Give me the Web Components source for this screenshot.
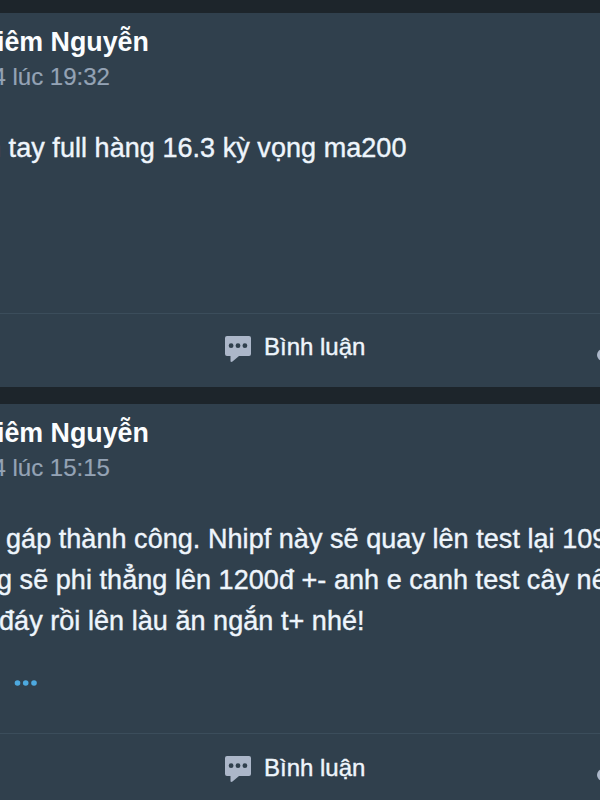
<!DOCTYPE html>
<html lang="vi">
<head>
<meta charset="UTF-8">
<title>Feed</title>
<style>
    body {
        margin: 0;
        height: 800px;
        overflow: hidden;
        background: #1d252b;
        font-family: "Liberation Sans", Arial, sans-serif;
    }
</style>
</head>
<body>
<post-feed>
    <feed-post style="--height: 374px">
        <span slot="name">iêm Nguyễn</span>
        <span slot="time">4 lúc 19:32</span>
        <post-line style="--shift: -14px">n tay full hàng 16.3 kỳ vọng ma200</post-line>
    </feed-post>
    <feed-post style="--height: 403px; --label-top: 17px">
        <span slot="name">iêm Nguyễn</span>
        <span slot="time">4 lúc 15:15</span>
        <post-line style="--shift: 6px">gáp thành công. Nhipf này sẽ quay lên test lại 109</post-line>
        <post-line style="--shift: -3px">g sẽ phi thẳng lên 1200đ +- anh e canh test cây nế</post-line>
        <post-line style="--shift: -1px">đáy rồi lên làu ăn ngắn t+ nhé!</post-line>
        <more-dots slot="more"></more-dots>
    </feed-post>
</post-feed>

<script>
class PostFeed extends HTMLElement {
    connectedCallback() {
        this.attachShadow({ mode: 'open' });
        this.shadowRoot.innerHTML = `
            <style>
                :host {
                    display: flex;
                    flex-direction: column;
                    gap: 17px;
                    padding-top: 13px;
                    overflow: hidden;
                }
            </style>
            <slot></slot>
        `;
    }
}

class PostLine extends HTMLElement {
    connectedCallback() {
        this.attachShadow({ mode: 'open' });
        this.shadowRoot.innerHTML = `
            <style>
                :host {
                    display: block;
                    margin-left: var(--shift, 0);
                    white-space: nowrap;
                    font-size: 27px;
                    letter-spacing: 0.05px;
                    line-height: 41px;
                    color: #eef5fc;
                    -webkit-text-stroke: 0.4px #eef5fc;
                }
            </style>
            <slot></slot>
        `;
    }
}

class MoreDots extends HTMLElement {
    connectedCallback() {
        this.attachShadow({ mode: 'open' });
        this.shadowRoot.innerHTML = `
            <style>
                :host {
                    display: flex;
                    padding: 37px 0 0 14px;
                }
            </style>
            <svg width="24" height="8" viewBox="0 0 24 8" fill="#4da9df">
                <circle cx="3.5" cy="4" r="2.8"/>
                <circle cx="11.7" cy="4" r="2.8"/>
                <circle cx="20" cy="4" r="2.8"/>
            </svg>
        `;
    }
}

class PostActions extends HTMLElement {
    connectedCallback() {
        this.attachShadow({ mode: 'open' });
        this.shadowRoot.innerHTML = `
            <style>
                :host {
                    display: flex;
                    justify-content: space-between;
                    box-sizing: border-box;
                    height: 74px;
                    flex-shrink: 0;
                    border-top: 1px solid #3b4d5b;
                    overflow: hidden;
                }
                .comment {
                    display: flex;
                    gap: 13px;
                    padding-left: 225px;
                    font-size: 24px;
                    line-height: 34px;
                    color: #eef5fc;
                    -webkit-text-stroke: 0.4px #eef5fc;
                }
                .comment svg {
                    margin-top: 22px;
                }
                .comment span {
                    margin-top: var(--label-top, 16px);
                }
                .share {
                    width: 3px;
                    padding-top: 35px;
                }
                .share svg {
                    display: block;
                }
            </style>
            <div class="comment">
                <svg width="26" height="27" viewBox="0 0 26 27">
                    <path fill="#acb7c9" d="M2 0H24Q26 0 26 2V18Q26 20 24 20H14L7.5 25.6Q5.5 26.8 5.5 24.8V20H2Q0 20 0 18V2Q0 0 2 0Z"/>
                    <g fill="#30404d">
                        <circle cx="6.1" cy="9.7" r="2.4"/>
                        <circle cx="13" cy="9.7" r="2.4"/>
                        <circle cx="19.9" cy="9.7" r="2.4"/>
                    </g>
                </svg>
                <span>Bình luận</span>
            </div>
            <div class="share">
                <svg width="12" height="12" viewBox="0 0 12 12"><circle cx="6" cy="6" r="6" fill="#acb7c9"/></svg>
            </div>
        `;
    }
}

class FeedPost extends HTMLElement {
    connectedCallback() {
        this.attachShadow({ mode: 'open' });
        this.shadowRoot.innerHTML = `
            <style>
                :host {
                    display: flex;
                    flex-direction: column;
                    flex-shrink: 0;
                    box-sizing: border-box;
                    height: var(--height);
                    padding-top: 11px;
                    background: #30404d;
                    overflow: hidden;
                }
                .name {
                    margin-left: -3px;
                    font-size: 26.8px;
                    font-weight: 700;
                    line-height: 36px;
                    color: #fbfdff;
                    white-space: nowrap;
                }
                .time {
                    margin-left: -7.5px;
                    font-size: 24px;
                    line-height: 34px;
                    color: #94a3b5;
                    -webkit-text-stroke: 0.2px #94a3b5;
                    white-space: nowrap;
                }
                .content {
                    flex: 1;
                    margin-top: 34px;
                }
            </style>
            <div class="name"><slot name="name"></slot></div>
            <div class="time"><slot name="time"></slot></div>
            <div class="content">
                <slot></slot>
                <slot name="more"></slot>
            </div>
            <post-actions></post-actions>
        `;
    }
}

customElements.define('post-feed', PostFeed);
customElements.define('post-line', PostLine);
customElements.define('more-dots', MoreDots);
customElements.define('post-actions', PostActions);
customElements.define('feed-post', FeedPost);
</script>
</body>
</html>
